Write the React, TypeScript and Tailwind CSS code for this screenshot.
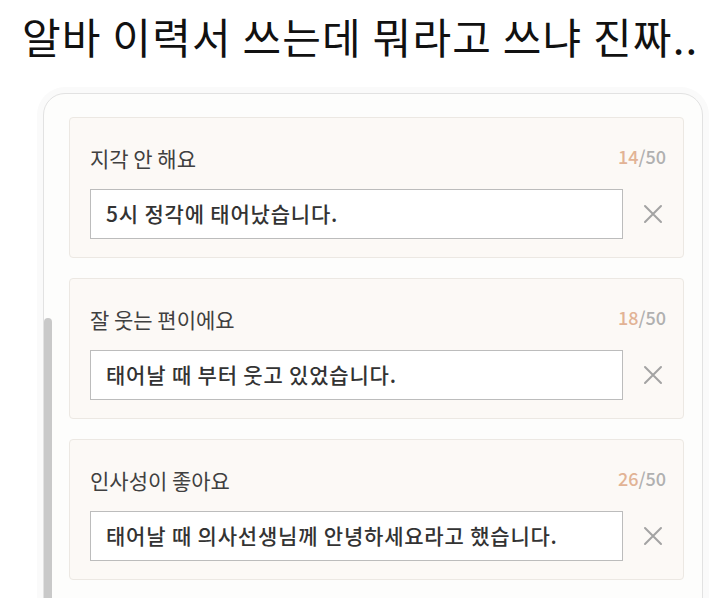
import React from 'react'

const items = [
  { label: '지각 안 해요', count: 14, text: '5시 정각에 태어났습니다.' },
  { label: '잘 웃는 편이에요', count: 18, text: '태어날 때 부터 웃고 있었습니다.' },
  { label: '인사성이 좋아요', count: 26, text: '태어날 때 의사선생님께 안녕하세요라고 했습니다.' },
]

function CloseIcon() {
  return (
    <svg width="20" height="20" viewBox="0 0 20 20" fill="none">
      <path d="M2 2 L18 18 M18 2 L2 18" stroke="#a3a3a3" strokeWidth="2" strokeLinecap="round" />
    </svg>
  )
}

export default function App() {
  return (
    <div
      className="w-[726px] h-[598px] bg-white overflow-hidden"
      style={{ fontFamily: '"Noto Sans CJK KR", "Noto Sans", sans-serif' }}
    >
      {/* 제목 */}
      <h1 className="pl-[22px] pt-[11px] h-[93px] text-[42px] leading-[50px] font-normal tracking-[1.2px] text-[#111] whitespace-nowrap">
        알바 이력서 쓰는데 뭐라고 쓰냐 진짜..
      </h1>

      {/* 캡처된 폼 */}
      <div className="relative ml-[43px] w-[660px] h-[540px] rounded-[22px] border border-[#e2e2e2] bg-[#fdfdfc] pt-[23px] pl-[25px] pr-[18px] shadow-[0_0_0_6px_#fafafa]">
        <div className="absolute left-0 top-[224px] w-[8px] h-[330px] rounded-t-[4px] bg-[#c9c9c9]" />
        <div className="flex flex-col gap-[20px]">
          {items.map((it) => (
            <div
              key={it.label}
              className="h-[141px] rounded-[4px] border border-[#ece8e3] bg-[#fcf9f6] flex flex-col"
            >
              <div className="flex items-center justify-between pl-[20px] pr-[17px] pt-[25px] h-[51px]">
                <span className="text-[21px] leading-[26px] text-[#404040] mt-[4px]">{it.label}</span>
                <span className="text-[18px] leading-[22px] font-medium">
                  <span className="text-[#e2b395]">{it.count}</span>
                  <span className="text-[#b0b0b0]">/50</span>
                </span>
              </div>
              <div className="flex items-center pl-[20px] mt-[20px]">
                <div className="flex-1 h-[50px] border border-[#bcbcbc] bg-white flex items-center px-[15px]">
                  <span className="text-[21px] font-medium tracking-[0.8px] text-[#333] whitespace-nowrap">{it.text}</span>
                </div>
                <div className="w-[60px] flex items-center justify-center">
                  <CloseIcon />
                </div>
              </div>
            </div>
          ))}
        </div>
      </div>
    </div>
  )
}
